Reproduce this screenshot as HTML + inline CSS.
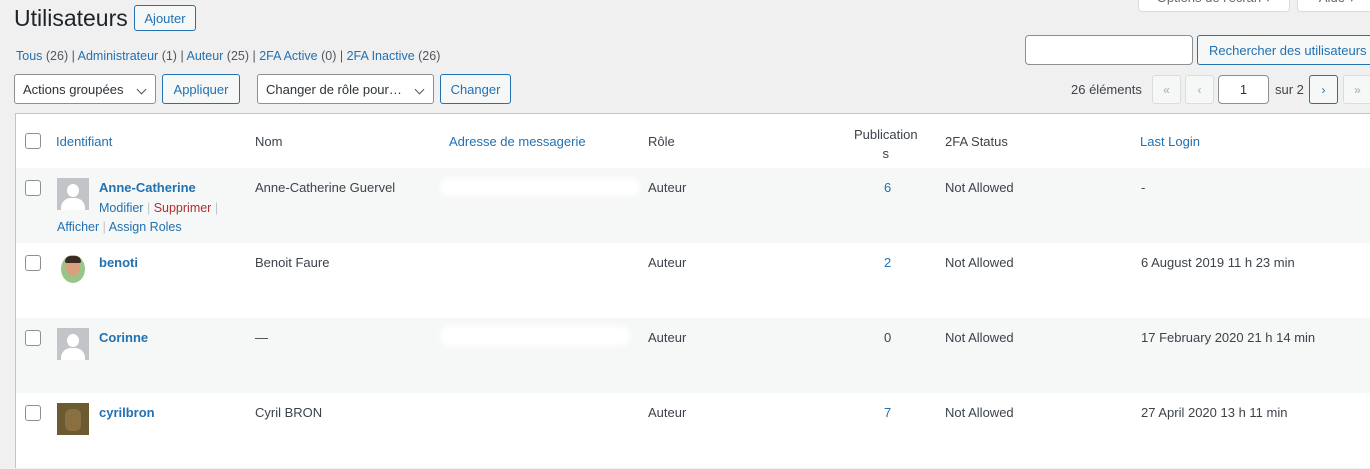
<!DOCTYPE html>
<html><head><meta charset="utf-8"><style>
*{box-sizing:border-box;margin:0;padding:0}
body{width:1370px;height:469px;overflow:hidden;background:#f0f0f1;font-family:"Liberation Sans",sans-serif;font-size:13px;color:#3c434a;position:relative}
.a{position:absolute;white-space:nowrap}
.lk{color:#2271b1}
.btn{position:absolute;border:1px solid #2271b1;border-radius:3px;background:#f6f7f7;color:#2271b1;font-size:13px;display:flex;align-items:center;justify-content:center}
.sel{position:absolute;border:1px solid #8c8f94;border-radius:3px;background:#fff;color:#2c3338;font-size:13px;padding-left:8px;display:flex;align-items:center}
.sel:after{content:"";position:absolute;right:10px;top:11px;width:6px;height:6px;border-right:1.5px solid #50575e;border-bottom:1.5px solid #50575e;transform:rotate(45deg)}
.cb{position:absolute;left:25px;width:16px;height:16px;border:1px solid #8c8f94;border-radius:3px;background:#fff}
.row{position:absolute;left:15px;width:1360px;height:75px;border-left:1px solid #c3c4c7}
.av{position:absolute;left:57px;width:32px;height:32px;background:#c3c4c7;overflow:hidden}
.av .h{position:absolute;left:10px;top:6px;width:12px;height:13px;border-radius:50%;background:#fff}
.av .b{position:absolute;left:4px;top:20px;width:24px;height:16px;border-radius:10px 10px 0 0;background:#fff}
.u{font-weight:bold;color:#2271b1}
.blur{position:absolute;background:#fff;border-radius:10px;filter:blur(3px)}
.pg{position:absolute;top:75px;width:29px;height:29px;border:1px solid #dcdcde;border-radius:3px;background:#f6f7f7;color:#a7aaad;font-size:12px;display:flex;align-items:center;justify-content:center}
</style></head><body>
<div class="a" style="left:1138px;top:-18px;width:152px;height:30px;border:1px solid #dcdcde;border-radius:4px;background:#fff;color:#646970;text-align:center;line-height:30px">Options de l'écran ▾</div>
<div class="a" style="left:1297px;top:-18px;width:80px;height:30px;border:1px solid #dcdcde;border-radius:4px;background:#fff;color:#646970;text-align:center;line-height:30px">Aide ▾</div>
<div class="a" style="left:14px;top:5px;font-size:23px;color:#1d2327">Utilisateurs</div>
<div class="btn" style="left:134px;top:5px;width:62px;height:26px;font-size:13px">Ajouter</div>
<div class="a" style="left:16px;top:49px;font-size:12.5px;color:#50575e"><span class="lk">Tous</span> (26) | <span class="lk">Administrateur</span> (1) | <span class="lk">Auteur</span> (25) | <span class="lk">2FA Active</span> (0) | <span class="lk">2FA Inactive</span> (26)</div>
<div class="sel" style="left:14px;top:74px;width:142px;height:30px">Actions groupées</div>
<div class="btn" style="left:162px;top:74px;width:78px;height:30px">Appliquer</div>
<div class="sel" style="left:257px;top:74px;width:177px;height:30px">Changer de rôle pour…</div>
<div class="btn" style="left:440px;top:74px;width:71px;height:30px">Changer</div>
<div class="a" style="left:1025px;top:35px;width:168px;height:30px;border:1px solid #8c8f94;border-radius:4px;background:#fff"></div>
<div class="btn" style="left:1197px;top:35px;width:180px;height:30px;justify-content:flex-start;padding-left:11px">Rechercher des utilisateurs</div>
<div class="a" style="left:1071px;top:82px;color:#3c434a">26 éléments</div>
<div class="pg" style="left:1152px">«</div>
<div class="pg" style="left:1185px">‹</div>
<div class="a" style="left:1218px;top:75px;width:51px;height:29px;border:1px solid #8c8f94;border-radius:4px;background:#fff;text-align:center;line-height:27px;color:#2c3338">1</div>
<div class="a" style="left:1275px;top:82px">sur 2</div>
<div class="pg" style="left:1309px;border-color:#2271b1;color:#2271b1">›</div>
<div class="pg" style="left:1343px">»</div>

<div class="a" style="left:15px;top:113px;width:1360px;height:56px;background:#fff;border:1px solid #c3c4c7;border-right:none"></div>
<div class="cb" style="top:133px"></div>
<div class="a lk" style="left:56px;top:134px">Identifiant</div>
<div class="a" style="left:255px;top:134px">Nom</div>
<div class="a lk" style="left:449px;top:134px">Adresse de messagerie</div>
<div class="a" style="left:648px;top:134px">Rôle</div>
<div class="a" style="left:854px;top:125px;line-height:19px;text-align:center">Publication<br>s</div>
<div class="a" style="left:945px;top:134px">2FA Status</div>
<div class="a lk" style="left:1140px;top:134px">Last Login</div>

<div class="row" style="top:168px;background:#f6f7f7"></div>
<div class="row" style="top:243px;background:#fff"></div>
<div class="row" style="top:318px;background:#f6f7f7"></div>
<div class="row" style="top:393px;background:#fff"></div>

<!-- row1 -->
<div class="cb" style="top:180px"></div>
<div class="av" style="top:178px"><div class="h"></div><div class="b"></div></div>
<div class="a u" style="left:99px;top:180px">Anne-Catherine</div>
<div class="a" style="left:99px;top:201px;font-size:12.5px"><span class="lk">Modifier</span> <span style="color:#c3c4c7">|</span> <span style="color:#b32d2e">Supprimer</span> <span style="color:#c3c4c7">|</span></div>
<div class="a" style="left:57px;top:220px;font-size:12.5px"><span class="lk">Afficher</span> <span style="color:#c3c4c7">|</span> <span class="lk">Assign Roles</span></div>
<div class="a" style="left:255px;top:180px">Anne-Catherine Guervel</div>
<div class="blur" style="left:440px;top:178px;width:200px;height:18px"></div>
<div class="a" style="left:648px;top:180px">Auteur</div>
<div class="a lk" style="left:884px;top:180px">6</div>
<div class="a" style="left:945px;top:180px">Not Allowed</div>
<div class="a" style="left:1141px;top:180px">-</div>
<!-- row2 -->
<div class="cb" style="top:255px"></div>
<div class="av" style="top:253px;background:#fff"><div style="position:absolute;left:4px;top:2px;width:24px;height:28px;border-radius:50%;background:#9bc48a"></div><div style="position:absolute;left:9px;top:6px;width:14px;height:17px;border-radius:50%;background:#d9a07f"></div><div style="position:absolute;left:8px;top:3px;width:16px;height:7px;border-radius:6px 6px 2px 2px;background:#3b2a22"></div></div>
<div class="a u" style="left:99px;top:255px">benoti</div>
<div class="a" style="left:255px;top:255px">Benoit Faure</div>
<div class="a" style="left:648px;top:255px">Auteur</div>
<div class="a lk" style="left:884px;top:255px">2</div>
<div class="a" style="left:945px;top:255px">Not Allowed</div>
<div class="a" style="left:1141px;top:255px">6 August 2019 11 h 23 min</div>
<!-- row3 -->
<div class="cb" style="top:330px"></div>
<div class="av" style="top:328px"><div class="h"></div><div class="b"></div></div>
<div class="a u" style="left:99px;top:330px">Corinne</div>
<div class="a" style="left:255px;top:330px">—</div>
<div class="blur" style="left:440px;top:326px;width:190px;height:20px"></div>
<div class="a" style="left:648px;top:330px">Auteur</div>
<div class="a" style="left:884px;top:330px">0</div>
<div class="a" style="left:945px;top:330px">Not Allowed</div>
<div class="a" style="left:1141px;top:330px">17 February 2020 21 h 14 min</div>
<!-- row4 -->
<div class="cb" style="top:405px"></div>
<div class="av" style="top:403px;background:#6b5a32"><div style="position:absolute;left:8px;top:6px;width:16px;height:22px;border-radius:6px;background:#8a7040"></div></div>
<div class="a u" style="left:99px;top:405px">cyrilbron</div>
<div class="a" style="left:255px;top:405px">Cyril BRON</div>
<div class="a" style="left:648px;top:405px">Auteur</div>
<div class="a lk" style="left:884px;top:405px">7</div>
<div class="a" style="left:945px;top:405px">Not Allowed</div>
<div class="a" style="left:1141px;top:405px">27 April 2020 13 h 11 min</div>
</body></html>
